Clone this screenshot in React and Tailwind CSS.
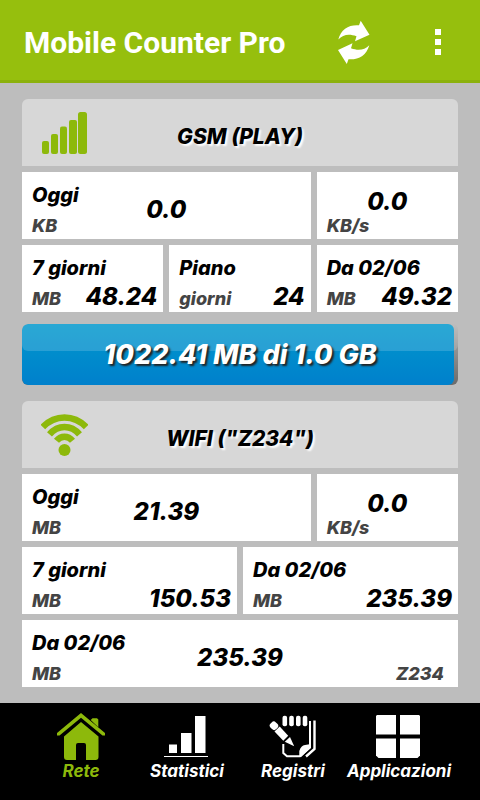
import React, { useState } from 'react';

const gsm = {
  title: 'GSM (PLAY)',
  today: { label: 'Oggi', unit: 'KB', value: '0.0' },
  speed: { unit: 'KB/s', value: '0.0' },
  periods: [
    { label: '7 giorni', unit: 'MB', value: '48.24' },
    { label: 'Piano', unit: 'giorni', value: '24' },
    { label: 'Da 02/06', unit: 'MB', value: '49.32' },
  ],
};

const wifi = {
  title: 'WIFI ("Z234")',
  today: { label: 'Oggi', unit: 'MB', value: '21.39' },
  speed: { unit: 'KB/s', value: '0.0' },
  periods: [
    { label: '7 giorni', unit: 'MB', value: '150.53' },
    { label: 'Da 02/06', unit: 'MB', value: '235.39' },
  ],
  network: { label: 'Da 02/06', unit: 'MB', value: '235.39', note: 'Z234' },
};

function RefreshIcon() {
  return (
    <svg width="34" height="45" viewBox="0 0 34 45" fill="#fff" aria-hidden="true">
      <path d="M1.3 19.5C4 9 12 4.500 22 5.300L23.700 .7L32.500 14.700L18 21.300L19.500 16.300C12 13.500 6 14.500 1.300 19.500Z" />
      <path d="M32.300 25.200C29.500 35.500 21.500 40 11.500 39.300L9.800 44L1 30L15.500 23.300L14 28.300C21.500 31 27.500 30 32.300 25.200Z" />
    </svg>
  );
}

function SignalIcon() {
  return (
    <svg width="45" height="42" viewBox="0 0 45 42" fill="#8db90b" aria-hidden="true">
      <rect x="0" y="29" width="7" height="13" rx="2" />
      <rect x="9" y="22" width="7" height="20" rx="2" />
      <rect x="18" y="14.500" width="7" height="27.500" rx="2" />
      <rect x="27" y="8" width="8" height="34" rx="2" />
      <rect x="36" y="0" width="9" height="42" rx="2.500" />
    </svg>
  );
}

function WifiIcon() {
  return (
    <svg width="47" height="42" viewBox="0 0 47 42" fill="none" stroke="#8db90b" strokeWidth="6.500" aria-hidden="true">
      <path d="M1.800 13C14 .2 33 .2 45.200 13" />
      <path d="M8.500 20.300C17 10.500 30 10.500 38.500 20.300" />
      <path d="M15.500 26.800C20 21.300 27 21.300 31.500 26.800" />
      <circle cx="23.500" cy="36" r="6" fill="#8db90b" stroke="none" />
    </svg>
  );
}

function HomeIcon() {
  return (
    <svg width="48" height="48" viewBox="0 0 48 48" fill="#8db90b" aria-hidden="true">
      <path d="M24 0L48 20V22.500H45.500L24 4.800L2.500 22.500H0V20Z" />
      <path d="M33.700 7L35.500 5.300H40L41.300 6.500V14.300Z" />
      <path d="M24 9L41.500 23.500V44Q41.500 47 38.500 47H29V32Q29 30 27 30H21Q19 30 19 32V47H10Q7 47 7 44V23.500Z" />
    </svg>
  );
}

function StatsIcon() {
  return (
    <svg width="48" height="48" viewBox="0 0 48 48" fill="#fff" aria-hidden="true">
      <rect x="6" y="31.500" width="8" height="8.500" />
      <rect x="18" y="20" width="10.500" height="20" />
      <rect x="32" y="3" width="10.500" height="37" />
      <rect x="1" y="43" width="44" height="1" />
    </svg>
  );
}

function LogIcon() {
  return (
    <svg width="48" height="48" viewBox="0 0 48 48" fill="#fff" aria-hidden="true">
      <rect x="13.500" y="2.700" width="4.600" height="10.600" rx="2" />
      <rect x="20.200" y="2.700" width="4.600" height="10.600" rx="2" />
      <rect x="27" y="2.700" width="4.600" height="10.600" rx="2" />
      <rect x="33.700" y="2.700" width="4.600" height="10.600" rx="2" />
      <rect x="1" y="9" width="8" height="7.500" rx="3" transform="rotate(45 5 12.700)" />
      <path d="M5.500 18.500L10.700 13.500L19.200 22.700L14.300 27.700Z" />
      <path d="M15.800 28.700L21 24L25.200 33.200Z" />
      <path d="M14.300 31V40L18 43.200H31L41 34.500V8" fill="none" stroke="#fff" strokeWidth="2" />
      <path d="M30.300 44V38Q32 32.500 36 32L42 31V34.500L32 44Z" />
      <path d="M45.500 7.500V36L37 43.500" fill="none" stroke="#fff" strokeWidth="2.400" />
    </svg>
  );
}

function AppsIcon() {
  return (
    <svg width="48" height="48" viewBox="0 0 48 48" fill="#fff" aria-hidden="true">
      <path d="M2 2H21V21.500H1V3Z" />
      <path d="M25 2H44L45 3V21.500H25Z" />
      <path d="M1 25.500H21V45H3.500L1 42.500Z" />
      <path d="M25 25.500H45V42.500L42.500 45H25Z" />
    </svg>
  );
}

const tabs = [
  { id: 'rete', label: 'Rete', Icon: HomeIcon },
  { id: 'statistici', label: 'Statistici', Icon: StatsIcon },
  { id: 'registri', label: 'Registri', Icon: LogIcon },
  { id: 'applicazioni', label: 'Applicazioni', Icon: AppsIcon },
];

function SectionHeader({ icon, title }) {
  return (
    <div className="grid grid-cols-[1fr_auto_1fr] items-center min-h-[67px] px-[18px] rounded-t-md bg-[#d7d7d7]">
      <div className="flex w-12 justify-center">{icon}</div>
      <h2 className="pt-2 text-[21px] leading-7 [text-shadow:2px_2px_2px_#fff]">{title}</h2>
    </div>
  );
}

// Wide cell: label and unit on the left, value in the middle, optional note on the right
function WideCell({ item, className = '' }) {
  return (
    <div className={`grid grid-cols-[1fr_auto_1fr] min-h-[67px] px-2.5 pt-[9px] pb-px bg-white ${className}`}>
      <div className="flex flex-col justify-between">
        <div className="text-xl leading-7">{item.label}</div>
        <div className="text-lg leading-6 text-[#444]">{item.unit}</div>
      </div>
      <div className="self-center text-2xl leading-7">{item.value}</div>
      <div className="self-end pr-1 text-right text-lg leading-6 text-[#444]">{item.note}</div>
    </div>
  );
}

function SpeedCell({ item }) {
  return (
    <div className="flex flex-col justify-between min-h-[67px] px-2.5 pt-[18px] pb-px bg-white">
      <div className="text-center text-2xl leading-6">{item.value}</div>
      <div className="text-lg leading-6 text-[#444]">{item.unit}</div>
    </div>
  );
}

function PeriodCell({ item }) {
  return (
    <div className="flex flex-col justify-between min-h-[67px] pl-2.5 pr-1.5 pt-[9px] pb-px bg-white">
      <div className="text-xl leading-7">{item.label}</div>
      <div className="flex items-end justify-between">
        <span className="text-lg leading-6 text-[#444]">{item.unit}</span>
        <span className="text-2xl leading-7">{item.value}</span>
      </div>
    </div>
  );
}

function UsageBar({ percent, text }) {
  return (
    <div
      role="progressbar"
      aria-valuenow={percent}
      aria-label={text}
      className="grid h-[61px] overflow-hidden rounded-md bg-linear-to-b from-[#b0b0b0] to-[#6b6b6b]"
    >
      <div
        className="col-start-1 row-start-1 rounded-md overflow-hidden bg-linear-to-b from-[#0098cc] to-[#0080cc]"
        style={{ width: `${percent}%` }}
      />
      <div className="col-start-1 row-start-1 h-[27px] rounded-b-md bg-white/16" />
      <div className="col-start-1 row-start-1 self-center text-center text-[27px] leading-8 text-white [text-shadow:2px_2px_2px_#222]">
        {text}
      </div>
    </div>
  );
}

export default function App() {
  const [active, setActive] = useState('rete');

  return (
    <div className="flex min-h-screen flex-col bg-[#bdbdbd] font-['Inter',sans-serif]">
      <header className="flex h-[83px] items-center border-b-3 border-[#8bb10c] bg-[#96bf0d] pl-6 pr-[33px] pt-1">
        <h1 className="flex-1 font-['Roboto',sans-serif] text-[30px] font-bold text-white">Mobile Counter Pro</h1>
        <button type="button" aria-label="Aggiorna" className="mr-[58px]">
          <RefreshIcon />
        </button>
        <button type="button" aria-label="Menu" className="flex flex-col gap-1 px-1.5">
          <span className="size-1.5 bg-white" />
          <span className="size-1.5 bg-white" />
          <span className="size-1.5 bg-white" />
        </button>
      </header>

      <main className="flex-1 px-[22px] py-4 font-extrabold italic text-black">
        <section className="flex flex-col gap-1.5">
          <SectionHeader icon={<SignalIcon />} title={gsm.title} />
          <div className="grid grid-cols-3 gap-1.5">
            <WideCell item={gsm.today} className="col-span-2" />
            <SpeedCell item={gsm.speed} />
            {gsm.periods.map((item) => (
              <PeriodCell key={item.label} item={item} />
            ))}
          </div>
        </section>

        <div className="mt-3 mb-4">
          <UsageBar percent={99} text="1022.41 MB di 1.0 GB" />
        </div>

        <section className="flex flex-col gap-1.5">
          <SectionHeader icon={<WifiIcon />} title={wifi.title} />
          <div className="grid grid-cols-3 gap-1.5">
            <WideCell item={wifi.today} className="col-span-2" />
            <SpeedCell item={wifi.speed} />
          </div>
          <div className="grid grid-cols-2 gap-1.5">
            {wifi.periods.map((item) => (
              <PeriodCell key={item.label} item={item} />
            ))}
          </div>
          <WideCell item={wifi.network} />
        </section>
      </main>

      <nav className="grid grid-cols-4 bg-black px-7 pt-2.5 pb-[19px]">
        {tabs.map(({ id, label, Icon }) => (
          <button
            key={id}
            type="button"
            onClick={() => setActive(id)}
            className={`flex flex-col items-center text-[17px] leading-5 font-bold italic ${
              active === id ? 'text-[#8db90b]' : 'text-white'
            }`}
          >
            <Icon />
            {label}
          </button>
        ))}
      </nav>
    </div>
  );
}
